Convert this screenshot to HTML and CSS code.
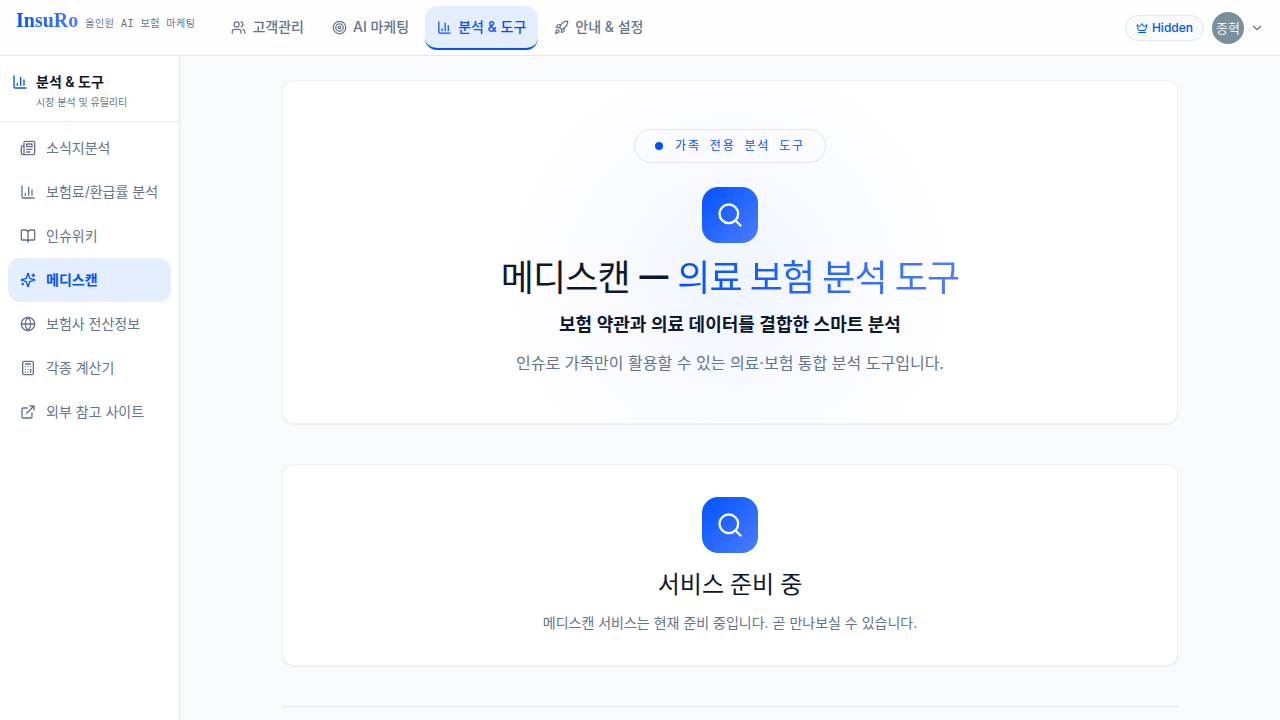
FILE: index.html
```html
<!DOCTYPE html>
<html lang="ko">
<head>
<meta charset="utf-8">
<meta name="viewport" content="width=device-width, initial-scale=1">
<title>InsuRo — 메디스캔</title>
<link rel="stylesheet" href="styles.css">
</head>
<body>
<svg class="sprite" aria-hidden="true">
  <symbol id="chart" viewBox="0 0 24 24"><path d="M3 3v16a2 2 0 0 0 2 2h16M18 17V9M13 17V5M8 17v-3"/></symbol>
  <symbol id="search" viewBox="0 0 24 24"><circle cx="11" cy="11" r="8"/><path d="m21 21-4.3-4.3"/></symbol>
</svg>
<header class="topbar">
  <a class="brand" href="#"><span class="brand-name">InsuRo</span><span class="brand-tag">올인원 AI 보험 마케팅</span></a>
  <nav class="tabs" aria-label="주 메뉴">
    <button class="tab" type="button"><svg class="icon" viewBox="0 0 24 24"><path d="M16 21v-2a4 4 0 0 0-4-4H6a4 4 0 0 0-4 4v2"/><circle cx="9" cy="7" r="4"/><path d="M22 21v-2a4 4 0 0 0-3-3.87M16 3.13a4 4 0 0 1 0 7.75"/></svg>고객관리</button>
    <button class="tab" type="button"><svg class="icon" viewBox="0 0 24 24"><circle cx="12" cy="12" r="10"/><circle cx="12" cy="12" r="6"/><circle cx="12" cy="12" r="2"/></svg>AI 마케팅</button>
    <button class="tab tab-active" type="button"><svg class="icon"><use href="#chart"/></svg>분석 &amp; 도구</button>
    <button class="tab" type="button"><svg class="icon" viewBox="0 0 24 24"><path d="M4.5 16.5c-1.5 1.26-2 5-2 5s3.74-.5 5-2c.71-.84.7-2.13-.09-2.91a2.18 2.18 0 0 0-2.91-.09z"/><path d="m12 15-3-3a22 22 0 0 1 2-3.95A12.88 12.88 0 0 1 22 2c0 2.72-.78 7.5-6 11a22.35 22.35 0 0 1-4 2z"/><path d="M9 12H4s.55-3.03 2-4c1.62-1.08 5 0 5 0M12 15v5s3.03-.55 4-2c1.08-1.62 0-5 0-5"/></svg>안내 &amp; 설정</button>
  </nav>
  <div class="account">
    <span class="tier"><svg class="icon" viewBox="0 0 24 24"><path d="M11.562 3.266a.5.5 0 0 1 .876 0L15.39 8.87a1 1 0 0 0 1.516.294L21.183 5.5a.5.5 0 0 1 .798.519l-2.834 10.246a1 1 0 0 1-.956.734H5.81a1 1 0 0 1-.957-.734L2.02 6.02a.5.5 0 0 1 .798-.519l4.276 3.664a1 1 0 0 0 1.516-.294zM5 21h14"/></svg>Hidden</span>
    <button class="user" type="button"><span class="avatar">종혁</span><svg class="icon" viewBox="0 0 24 24"><path d="m6 9 6 6 6-6"/></svg></button>
  </div>
</header>
<div class="shell">
  <aside class="sidebar">
    <div class="side-head">
      <div class="side-title"><svg class="icon"><use href="#chart"/></svg>분석 &amp; 도구</div>
      <p class="side-sub">시장 분석 및 유틸리티</p>
    </div>
    <nav class="side-nav" aria-label="분석 및 도구">
      <a class="side-link" href="#"><svg class="icon" viewBox="0 0 24 24"><path d="M4 22h16a2 2 0 0 0 2-2V4a2 2 0 0 0-2-2H8a2 2 0 0 0-2 2v16a2 2 0 0 1-2 2Zm0 0a2 2 0 0 1-2-2v-9c0-1.1.9-2 2-2h2M18 14h-8M15 18h-5M10 6h8v4h-8z"/></svg>소식지분석</a>
      <a class="side-link" href="#"><svg class="icon"><use href="#chart"/></svg>보험료/환급률 분석</a>
      <a class="side-link" href="#"><svg class="icon" viewBox="0 0 24 24"><path d="M12 7v14M3 18a1 1 0 0 1-1-1V4a1 1 0 0 1 1-1h5a4 4 0 0 1 4 4 4 4 0 0 1 4-4h5a1 1 0 0 1 1 1v13a1 1 0 0 1-1 1h-6a3 3 0 0 0-3 3 3 3 0 0 0-3-3z"/></svg>인슈위키</a>
      <a class="side-link side-link-active" href="#" aria-current="page"><svg class="icon" viewBox="0 0 24 24"><path d="M9.937 15.5A2 2 0 0 0 8.5 14.063l-6.135-1.582a.5.5 0 0 1 0-.962L8.5 9.936A2 2 0 0 0 9.937 8.5l1.582-6.135a.5.5 0 0 1 .963 0L14.063 8.5A2 2 0 0 0 15.5 9.937l6.135 1.581a.5.5 0 0 1 0 .964L15.5 14.063a2 2 0 0 0-1.437 1.437l-1.582 6.135a.5.5 0 0 1-.963 0zM20 3v4M22 5h-4M4 17v2M5 18H3"/></svg>메디스캔</a>
      <a class="side-link" href="#"><svg class="icon" viewBox="0 0 24 24"><circle cx="12" cy="12" r="10"/><path d="M12 2a14.5 14.5 0 0 0 0 20 14.5 14.5 0 0 0 0-20M2 12h20"/></svg>보험사 전산정보</a>
      <a class="side-link" href="#"><svg class="icon" viewBox="0 0 24 24"><rect width="16" height="20" x="4" y="2" rx="2"/><path d="M8 6h8M16 14v4M16 10h.01M12 10h.01M8 10h.01M12 14h.01M8 14h.01M12 18h.01M8 18h.01"/></svg>각종 계산기</a>
      <a class="side-link" href="#"><svg class="icon" viewBox="0 0 24 24"><path d="M15 3h6v6M10 14 21 3M18 13v6a2 2 0 0 1-2 2H5a2 2 0 0 1-2-2V8a2 2 0 0 1 2-2h6"/></svg>외부 참고 사이트</a>
    </nav>
  </aside>
  <main class="content">
    <div class="column">
      <section class="card hero">
        <span class="badge"><span class="dot"></span>가족 전용 분석 도구</span>
        <span class="tile"><svg class="icon"><use href="#search"/></svg></span>
        <h1 class="hero-title">메디스캔 <span class="dash">—</span> <span class="gradient-text">의료 보험 분석 도구</span></h1>
        <p class="hero-lead">보험 약관과 의료 데이터를 결합한 스마트 분석</p>
        <p class="hero-text">인슈로 가족만이 활용할 수 있는 의료·보험 통합 분석 도구입니다.</p>
      </section>
      <section class="card notice">
        <span class="tile"><svg class="icon"><use href="#search"/></svg></span>
        <h2 class="notice-title">서비스 준비 중</h2>
        <p class="notice-text">메디스캔 서비스는 현재 준비 중입니다. 곧 만나보실 수 있습니다.</p>
      </section>
      <footer class="page-foot"></footer>
    </div>
  </main>
</div>
</body>
</html>
```

FILE: styles.css
```css
:root {
  --accent: #0052ff;
  --accent-light: #4d7cff;
  --accent-soft: #e5eeff;
  --ink: #0f172a;
  --muted: #64748b;
  --line: #e2e8f0;
  --page: #f9fafc;
  --sans: Inter, "Noto Sans CJK KR", sans-serif;
  --mono: "DejaVu Sans Mono", "Noto Sans CJK KR", monospace;
  --display: "Liberation Serif", "Noto Sans CJK KR", serif;
}

*, *::before, *::after { box-sizing: border-box; }

body {
  margin: 0;
  height: 100vh;
  display: flex;
  flex-direction: column;
  overflow: hidden;
  background: var(--page);
  color: var(--ink);
  font-family: var(--sans);
  font-size: 14px;
  line-height: 20px;
}

h1, h2, p { margin: 0; }
a { color: inherit; text-decoration: none; }
button { font: inherit; color: inherit; background: none; border: 0; padding: 0; cursor: pointer; }

.sprite { display: none; }

.icon {
  width: 16px;
  height: 16px;
  flex: none;
  fill: none;
  stroke: currentColor;
  stroke-width: 2;
  stroke-linecap: round;
  stroke-linejoin: round;
}

.topbar {
  display: flex;
  align-items: flex-start;
  flex: none;
  height: 56px;
  padding: 0 16px;
  background: #fefefe;
  border-bottom: 1px solid var(--line);
}

.brand { display: flex; align-items: baseline; gap: 7px; padding-top: 6px; }

.brand-name,
.gradient-text {
  background: linear-gradient(to right, var(--accent), var(--accent-light));
  -webkit-background-clip: text;
  background-clip: text;
  color: transparent;
}

.brand-name {
  font-family: var(--display);
  font-size: 20px;
  font-weight: 700;
  line-height: 28px;
}

.brand-tag {
  font-family: var(--mono);
  font-size: 10px;
  letter-spacing: 0.5px;
  color: var(--muted);
}

.tabs { display: flex; gap: 4px; margin-left: 24px; padding-top: 6px; }

.tab {
  display: flex;
  align-items: center;
  gap: 6px;
  height: 44px;
  padding: 0 12px;
  border-bottom: 2px solid transparent;
  border-radius: 12px;
  color: var(--muted);
  font-weight: 500;
}
.tab .icon { width: 15px; height: 15px; }
.tab-active { color: var(--accent); background: var(--accent-soft); border-bottom-color: var(--accent); }

.account { display: flex; align-items: center; gap: 8px; height: 55px; margin-left: auto; }

.tier {
  display: flex;
  align-items: center;
  gap: 4px;
  height: 26px;
  padding: 0 10px;
  border: 1px solid var(--line);
  border-radius: 13px;
  background: #f8fafc;
  color: var(--accent);
  font-size: 12px;
  font-weight: 500;
}
.tier .icon { width: 12px; height: 12px; }

.user { display: flex; align-items: center; gap: 6px; color: var(--muted); }
.user .icon { width: 14px; height: 14px; }

.avatar {
  display: grid;
  place-items: center;
  width: 32px;
  height: 32px;
  border-radius: 50%;
  background: #78909c;
  color: #f1f5f9;
  font-size: 13px;
}

.shell { display: flex; flex: 1; min-height: 0; }

.sidebar { flex: none; width: 180px; background: #fff; border-right: 1px solid var(--line); }

.side-head { padding: 16px 12px 11px; border-bottom: 1px solid var(--line); }
.side-title { display: flex; align-items: center; gap: 8px; font-weight: 600; }
.side-title .icon { color: var(--accent); }
.side-sub { padding: 3px 0 0 24px; font-size: 10px; line-height: 15px; color: var(--muted); }

.side-nav { padding: 4px 8px; }

.side-link {
  display: flex;
  align-items: center;
  gap: 10px;
  height: 44px;
  padding: 0 12px;
  border-radius: 12px;
  color: var(--muted);
  white-space: nowrap;
}
.side-link-active { background: var(--accent-soft); color: var(--accent); font-weight: 600; }

.content { flex: 1; min-width: 0; padding: 24px; overflow: hidden; }

.column { display: flex; flex-direction: column; gap: 40px; max-width: 896px; margin: 0 auto; }

.card {
  display: flex;
  flex-direction: column;
  align-items: center;
  border: 1px solid #edf0f5;
  border-radius: 12px;
  background: #fff;
  box-shadow: 0 1px 2px rgba(15, 23, 42, 0.06);
  text-align: center;
}

.hero {
  padding: 48px;
  background: radial-gradient(circle at 50% 58%, rgba(0, 82, 255, 0.06), transparent 225px) #fff;
}

.badge {
  display: flex;
  align-items: center;
  gap: 12px;
  height: 34px;
  margin-bottom: 24px;
  padding: 0 20px;
  border: 1px solid var(--line);
  border-radius: 17px;
  color: var(--accent);
  font-family: var(--mono);
  font-size: 12px;
  letter-spacing: 1.8px;
}
.dot { width: 8px; height: 8px; border-radius: 50%; background: var(--accent); }

.tile {
  display: grid;
  place-items: center;
  width: 56px;
  height: 56px;
  margin-bottom: 16px;
  border-radius: 16px;
  background: linear-gradient(135deg, var(--accent), var(--accent-light));
  color: #fff;
}
.tile .icon { width: 28px; height: 28px; }

.hero-title {
  margin-bottom: 12px;
  font-family: var(--display);
  font-size: 36px;
  font-weight: 400;
  line-height: 40px;
  letter-spacing: -0.9px;
}
.dash { font-family: "Noto Sans CJK KR", sans-serif; font-weight: 700; line-height: 0; }
.hero-lead { margin-bottom: 12px; font-size: 18px; font-weight: 600; line-height: 28px; }
.hero-text { font-size: 16px; line-height: 24px; color: var(--muted); }

.notice { padding: 32px; }
.notice-title {
  margin-bottom: 12px;
  font-family: var(--display);
  font-size: 24px;
  font-weight: 400;
  line-height: 32px;
}
.notice-text { color: var(--muted); }

.page-foot { border-top: 1px solid var(--line); }
```
